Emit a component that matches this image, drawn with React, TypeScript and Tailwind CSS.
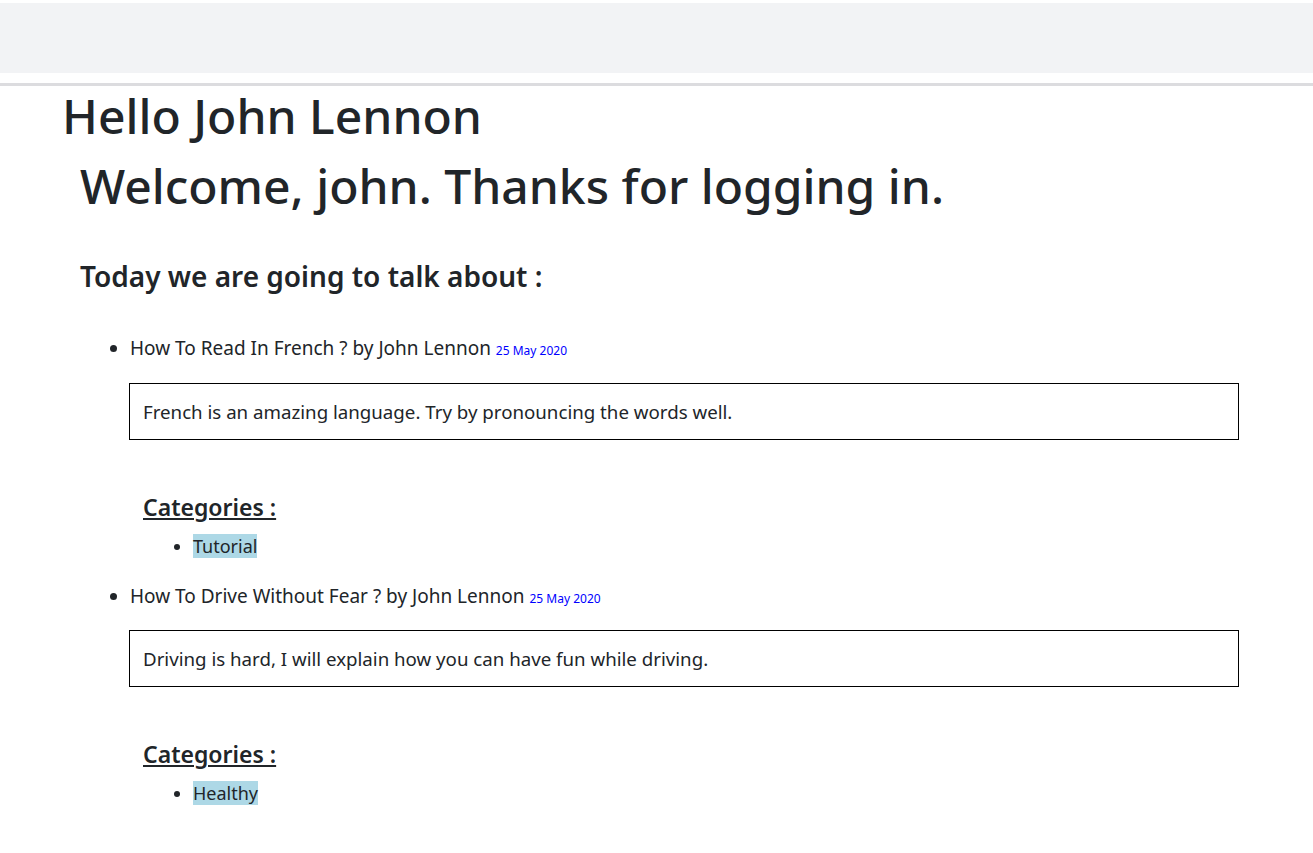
export default function App() {
  const posts = [
    {
      title: "How To Read In French ? by John Lennon",
      date: "25 May 2020",
      body: "French is an amazing language. Try by pronouncing the words well.",
      category: "Tutorial",
    },
    {
      title: "How To Drive Without Fear ? by John Lennon",
      date: "25 May 2020",
      body: "Driving is hard, I will explain how you can have fun while driving.",
      category: "Healthy",
    },
  ];

  return (
    <div className="min-h-screen bg-white text-[#212529]" style={{ fontFamily: '"Noto Sans", "Open Sans", sans-serif' }}>
      <div className="mt-[3px] h-[70px] bg-[#f2f3f5]" />
      <div className="mt-[10px] h-[3px] bg-[#dcdcdf]" />
      <div className="pl-[62px] pr-[74px]">
        <h1 className="text-[48px] leading-[60px] font-medium">Hello John Lennon</h1>
        <div className="pl-[18px]">
          <h1 className="text-[48px] leading-[80px] font-medium">Welcome, john. Thanks for logging in.</h1>
          <h3 className="mt-[32px] text-[28px] leading-[36px] font-semibold">Today we are going to talk about :</h3>
          <ul className="mt-[40px] list-disc pl-[50px] text-[19px]">
            {posts.map((post) => (
              <li key={post.title} className="mb-[24px]">
                <span className="leading-[28px]">{post.title}</span>{" "}
                <small className="text-[12px] text-[#0000ff]">{post.date}</small>
                <div className="mt-[20px] -ml-px border border-black px-[13px] py-[13px] text-[18.7px] leading-[29px]">
                  {post.body}
                </div>
                <div className="pl-[13px] pt-[53px]">
                  <h4 className="text-[23px] leading-[28px] font-semibold underline">Categories :</h4>
                  <ul className="mt-[13px] list-disc pl-[50px] text-[18px]">
                    <li className="leading-[24px]">
                      <span className="bg-[#add8e6]">{post.category}</span>
                    </li>
                  </ul>
                </div>
              </li>
            ))}
          </ul>
        </div>
      </div>
    </div>
  );
}
